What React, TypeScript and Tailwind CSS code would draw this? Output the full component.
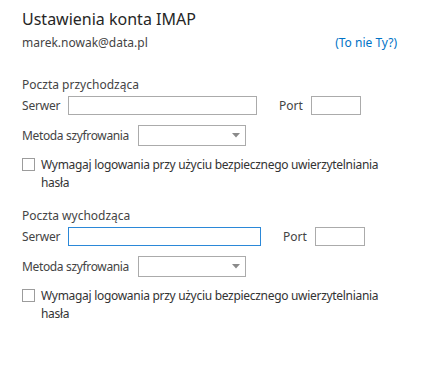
const font = { fontFamily: '"Segoe UI", "Noto Sans", "Liberation Sans", sans-serif' };

function Select() {
  return (
    <div className="flex h-[21px] w-[108px] items-center justify-end border border-[#ababab] bg-white pr-[5px]">
      <svg width="8" height="5" viewBox="0 0 8 5">
        <path d="M0 0 L8 0 L4 4.5 Z" fill="#8a8a8a" />
      </svg>
    </div>
  );
}

function Checkbox() {
  return (
    <div className="flex gap-[6px]">
      <div className="mt-[2px] h-[13px] w-[13px] shrink-0 border border-[#9c9c9c] bg-white" />
      <p className="w-[340px] text-[12px] leading-[18px] tracking-[-0.3px] text-[#333]">
        Wymagaj logowania przy użyciu bezpiecznego uwierzytelniania hasła
      </p>
    </div>
  );
}

function Section({
  title,
  serverWidth,
  focused,
}: {
  title: string;
  serverWidth: string;
  focused?: boolean;
}) {
  return (
    <div className="flex flex-col">
      <div className="text-[12px] leading-[18px] text-[#444]">{title}</div>
      <div className="mt-[2px] flex h-[19px] items-center">
        <span className="w-[46px] text-[12px] tracking-[-0.2px] text-[#444]">Serwer</span>
        <div
          className={`h-[19px] ${serverWidth} border bg-white ${
            focused ? "border-[#2b88d8]" : "border-[#ababab]"
          }`}
        />
        <span className="ml-[22px] w-[32px] text-[12px] text-[#444]">Port</span>
        <div className="h-[19px] w-[50px] border border-[#ababab] bg-white" />
      </div>
      <div className="mt-[10px] flex items-center">
        <span className="w-[116px] text-[12px] tracking-[-0.35px] text-[#444]">
          Metoda szyfrowania
        </span>
        <Select />
      </div>
      <div className="mt-[10px]">
        <Checkbox />
      </div>
    </div>
  );
}

export default function App() {
  return (
    <div className="h-[365px] w-[426px] bg-white pl-[22px] pt-[8px]" style={font}>
      <h1 className="text-[16px] leading-[22px] text-[#262626]">Ustawienia konta IMAP</h1>
      <div className="mt-[5px] flex w-[375px] items-center justify-between text-[12px] leading-[16px]">
        <span className="text-[#444]">marek.nowak@data.pl</span>
        <a className="text-[#0072c6]">(To nie Ty?)</a>
      </div>
      <div className="mt-[25px]">
        <Section title="Poczta przychodząca" serverWidth="w-[189px]" />
      </div>
      <div className="mt-[15px]">
        <Section title="Poczta wychodząca" serverWidth="w-[193px]" focused />
      </div>
    </div>
  );
}
